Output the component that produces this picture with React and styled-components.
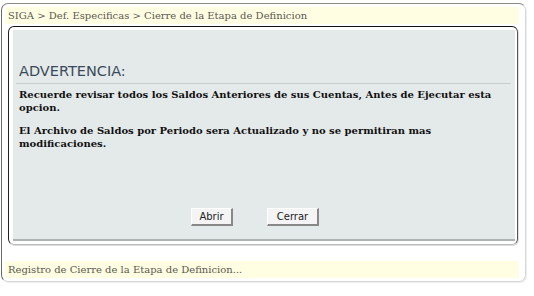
import styled, { createGlobalStyle } from "styled-components";

const Global = createGlobalStyle`
  html, body { margin: 0; padding: 0; background: #fff; }
  body { width: 534px; height: 296px; overflow: hidden; }
`;

const Page = styled.div`
  padding: 3px 8px 14px 1px;
  width: 534px;
  height: 296px;
  box-sizing: border-box;
`;

const Frame = styled.div`
  height: 100%;
  box-sizing: border-box;
  border: 1px solid #d8d8d8;
  border-left-color: #6a6a6a;
  border-top-color: #8a8a8a;
  border-radius: 7px;
  padding: 3px 6px 3px 3px;
  display: flex;
  flex-direction: column;
  box-shadow: 1px 1px 0 #eee;
`;

const InfoBar = styled.div`
  background: #fffde2;
  height: 17px;
  line-height: 17px;
  padding-left: 3px;
  font-family: "DejaVu Serif", serif;
  font-size: 10px;
  color: #5a5a50;
  white-space: nowrap;
`;

const Panel = styled.div`
  margin: 2px 1px 0 3px;
  border: 1px solid #bbb;
  border-top-color: #111;
  border-left-color: #222;
  border-right-color: #555;
  border-radius: 6px;
  padding: 3px 2px 3px 4px;
  height: 219px;
  box-sizing: border-box;
  display: flex;
  box-shadow: 1px 1px 0 #ddd;
`;

const Content = styled.div`
  flex: 1;
  background: #e4eaea;
  border-bottom: 2px solid #aeb2b2;
  padding: 33px 4px 0 3px;
  display: flex;
  flex-direction: column;
`;

const Title = styled.h2`
  margin: 0;
  padding-left: 3px;
  font-family: "DejaVu Sans", sans-serif;
  font-weight: normal;
  font-size: 14.5px;
  color: #3b4a5a;
  line-height: 17px;
  border-bottom: 1px solid #c8cccc;
  padding-bottom: 3px;
`;

const Message = styled.p`
  margin: ${(p) => (p.first ? "4px" : "10px")} 0 0 3px;
  font-family: "DejaVu Serif", serif;
  font-weight: bold;
  font-size: 10px;
  line-height: 13px;
  color: #111;
`;

const Actions = styled.div`
  margin-top: auto;
  display: flex;
  justify-content: center;
  gap: 34px;
  padding: 0 17px 13px 0;
`;

const Button = styled.button`
  font-family: "DejaVu Sans", sans-serif;
  font-size: 10px;
  color: #222;
  background: #f4f4f4;
  border: 1px solid #fff;
  border-right: 2px solid #888;
  border-bottom: 2px solid #888;
  height: 18px;
  padding: 0 7px;
  min-width: ${(p) => p.w}px;
  cursor: pointer;
`;

const Status = styled.div`
  margin-top: auto;
  background: #fffde2;
  height: 17px;
  line-height: 17px;
  padding-left: 3px;
  font-family: "DejaVu Serif", serif;
  font-size: 10px;
  color: #5a5a50;
  white-space: nowrap;
`;

export default function App() {
  return (
    <>
      <Global />
      <Page>
        <Frame>
          <InfoBar>SIGA &gt; Def. Especificas &gt; Cierre de la Etapa de Definicion</InfoBar>
          <Panel>
            <Content>
              <Title>ADVERTENCIA:</Title>
              <Message first>
                Recuerde revisar todos los Saldos Anteriores de sus Cuentas, Antes de Ejecutar esta opcion.
              </Message>
              <Message>
                El Archivo de Saldos por Periodo sera Actualizado y no se permitiran mas modificaciones.
              </Message>
              <Actions>
                <Button w={42}>Abrir</Button>
                <Button w={52}>Cerrar</Button>
              </Actions>
            </Content>
          </Panel>
          <Status>Registro de Cierre de la Etapa de Definicion...</Status>
        </Frame>
      </Page>
    </>
  );
}
